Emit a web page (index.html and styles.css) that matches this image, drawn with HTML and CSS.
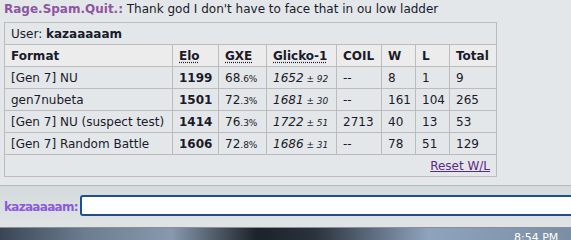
FILE: index.html
```html
<!DOCTYPE html>
<html lang="en">
<head>
    <meta charset="UTF-8">
    <title>Ladder</title>
    <link rel="stylesheet" href="styles.css">
</head>
<body>
    <div class="room">
        <div class="chat">
            <strong class="name">Rage.Spam.Quit.:</strong> Thank god I don't have to face that in ou low ladder
        </div>
        <table class="ladder">
            <colgroup>
                <col class="c-format">
                <col class="c-elo">
                <col class="c-gxe">
                <col class="c-glicko">
                <col class="c-coil">
                <col class="c-w">
                <col class="c-l">
                <col class="c-total">
            </colgroup>
            <tr class="user-row">
                <td colspan="8">User: <strong>kazaaaaam</strong></td>
            </tr>
            <tr class="head">
                <th>Format</th>
                <th><abbr>Elo</abbr></th>
                <th><abbr>GXE</abbr></th>
                <th><abbr>Glicko-1</abbr></th>
                <th>COIL</th>
                <th>W</th>
                <th>L</th>
                <th>Total</th>
            </tr>
            <tr>
                <td>[Gen 7] NU</td>
                <td><strong>1199</strong></td>
                <td>68<small>.6%</small></td>
                <td><em>1652<small> ± 92</small></em></td>
                <td>--</td>
                <td>8</td>
                <td>1</td>
                <td>9</td>
            </tr>
            <tr>
                <td>gen7nubeta</td>
                <td><strong>1501</strong></td>
                <td>72<small>.3%</small></td>
                <td><em>1681<small> ± 30</small></em></td>
                <td>--</td>
                <td>161</td>
                <td>104</td>
                <td>265</td>
            </tr>
            <tr>
                <td>[Gen 7] NU (suspect test)</td>
                <td><strong>1414</strong></td>
                <td>76<small>.3%</small></td>
                <td><em>1722<small> ± 51</small></em></td>
                <td>2713</td>
                <td>40</td>
                <td>13</td>
                <td>53</td>
            </tr>
            <tr>
                <td>[Gen 7] Random Battle</td>
                <td><strong>1606</strong></td>
                <td>72<small>.8%</small></td>
                <td><em>1686<small> ± 31</small></em></td>
                <td>--</td>
                <td>78</td>
                <td>51</td>
                <td>129</td>
            </tr>
            <tr class="reset-row">
                <td colspan="8"><a href="#">Reset W/L</a></td>
            </tr>
        </table>
    </div>
    <div class="compose">
        <label class="me" for="msg">kazaaaaam:</label>
        <input type="text" id="msg" class="msg">
    </div>
    <div class="taskbar">
        <span class="clock">8:54 PM</span>
    </div>
</body>
</html>
```
FILE: styles.css
```css
body {
    margin: 0;
    font-family: "DejaVu Sans", Verdana, sans-serif;
    font-size: 12px;
    color: #1a1a2a;
    background-color: #e3e7e9;
    height: 240px;
    overflow: hidden;
    display: flex;
    flex-direction: column;
}
.room {
    height: 186px;
    padding: 0 4px;
    border-bottom: 1px solid #b5b8ba;
    box-sizing: border-box;
}
.chat {
    height: 22px;
    line-height: 19px;
}
.chat .name {
    color: #8d56a2;
}
.ladder {
    border-collapse: collapse;
    width: 493px;
    table-layout: fixed;
}
.ladder td, .ladder th {
    border: 1px solid #bcbcbc;
    height: 21px;
    padding: 0 0 0 6px;
    text-align: left;
    white-space: nowrap;
    overflow: hidden;
}
.ladder th {
    background-color: #ececec;
    font-weight: bold;
}
.ladder abbr {
    text-decoration: underline dotted;
    text-underline-offset: 2px;
}
.ladder small {
    font-size: 9px;
}
.c-format { width: 168px; }
.c-elo { width: 46px; }
.c-gxe { width: 48px; }
.c-glicko { width: 70px; }
.c-coil { width: 45px; }
.c-w { width: 34px; }
.c-l { width: 34px; }
.c-total { width: 47px; }
.reset-row td {
    text-align: right;
    padding-right: 6px;
}
.reset-row a {
    color: #5a2a8a;
}
.compose {
    display: flex;
    align-items: center;
    height: 41px;
    background: linear-gradient(#d4dadd, #dfe3e5);
    border-bottom: 1px solid #8a9096;
}
.compose .me {
    flex: none;
    color: #8a5ae0;
    font-weight: bold;
    padding-left: 4px;
    width: 72px;
    letter-spacing: -0.7px;
    white-space: nowrap;
}
.compose .msg {
    flex: 1;
    height: 21px;
    margin: -2px -8px 0 4px;
    border: 2px solid #1f4f8c;
    border-radius: 3px;
    background: #fff;
    box-sizing: border-box;
}
.taskbar {
    flex: 1;
    background: linear-gradient(90deg, #3a4654 0%, #6d7d90 15%, #8899ad 30%, #1c2229 45%, #2a323c 55%, #8ea4bd 75%, #7b8ea4 100%);
    position: relative;
}
.taskbar .clock {
    position: absolute;
    left: 514px;
    top: 3px;
    color: #fff;
    font-size: 11px;
}
```
